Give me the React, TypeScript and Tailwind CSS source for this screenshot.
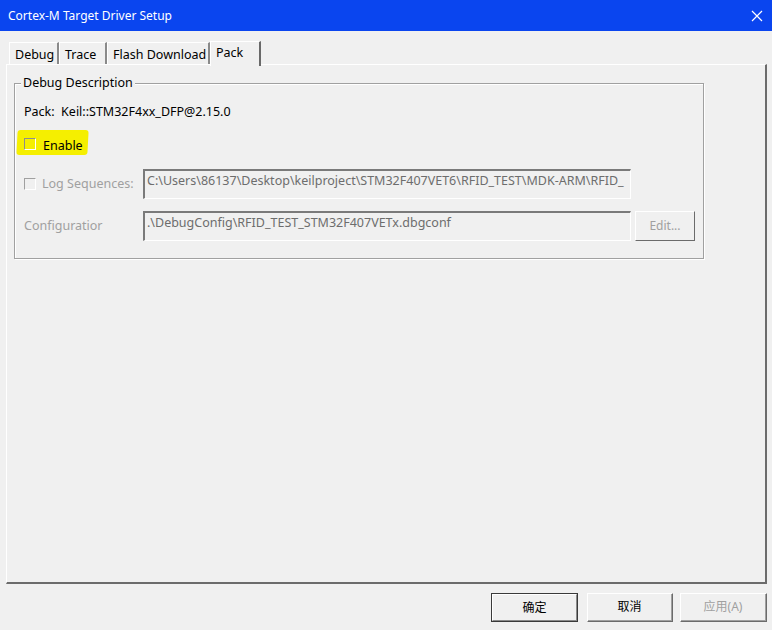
import React from "react";

const font = { fontFamily: '"Noto Sans", "Noto Sans CJK SC", sans-serif' };

function Tab({ label, active = false, w }: { label: string; active?: boolean; w: string }) {
  if (active) {
    return (
      <div
        className={`relative z-10 -mb-[2px] h-[25px] shrink-0 whitespace-nowrap ${w} border-t border-l border-white border-r-2 border-r-[#696969] bg-[#f0f0f0] pl-[5px] pt-[1px] text-[12.5px] leading-[20px] text-black`}
      >
        {label}
      </div>
    );
  }
  return (
    <div
      className={`h-[22px] shrink-0 whitespace-nowrap ${w} border-t border-l border-white border-r-2 border-r-[#8a8a8a] pl-[5px] pt-[2px] text-[12.5px] leading-[20px] text-black`}
    >
      {label}
    </div>
  );
}

function Checkbox({ disabled = false }: { disabled?: boolean }) {
  return (
    <span
      className={`relative inline-block h-[12px] w-[12px] border-t border-l border-b border-r ${
        disabled ? "border-t-[#a0a0a0] border-l-[#a0a0a0]" : "border-t-[#8d8d8d] border-l-[#8d8d8d]"
      } border-b-white border-r-white bg-transparent`}
    />
  );
}

function Field({ value, w }: { value: string; w: string }) {
  return (
    <div
      className={`h-[30px] ${w} overflow-hidden whitespace-nowrap border-t-2 border-l-2 border-t-[#7a7a7a] border-l-[#7a7a7a] border-b border-r border-b-white border-r-white bg-[#f0f0f0] pl-[2px] text-[12.5px] leading-[20px] text-[#6d6d6d]`}
    >
      {value}
    </div>
  );
}

function Button({ label, w, isDefault = false, disabled = false }: { label: string; w: string; isDefault?: boolean; disabled?: boolean }) {
  return (
    <div
      className={`flex h-[29px] ${w} items-center justify-center border ${
        isDefault ? "border-[#3a3a3a]" : "border-t-white border-l-white border-b-[#6b6b6b] border-r-[#6b6b6b]"
      } bg-[#f0f0f0] text-[12px] ${disabled ? "text-[#a0a0a0]" : "text-black"}`}
    >
      <div
        className={`flex h-full w-full items-center justify-center ${
          isDefault ? "border border-t-white border-l-white border-b-[#8a8a8a] border-r-[#8a8a8a]" : "border-b border-r border-b-[#a0a0a0] border-r-[#a0a0a0]"
        }`}
      >
        {label}
      </div>
    </div>
  );
}

export default function App() {
  return (
    <div className="flex h-[630px] w-[772px] flex-col bg-[#f0f0f0]" style={font}>
      {/* title bar */}
      <div className="flex h-[31px] items-center justify-between bg-[#0a45ef] pl-[8px] pr-[8px] text-[12px] text-white">
        <span>Cortex-M Target Driver Setup</span>
        <svg width="12" height="12" viewBox="0 0 12 12" className="mr-[1px]">
          <path d="M1 1 L11 11 M11 1 L1 11" stroke="white" strokeWidth="1.2" />
        </svg>
      </div>

      <div className="px-[6px] pt-[10px]">
        {/* tabs */}
        <div className="flex h-[23px] items-end pl-[3px]">
          <Tab label="Debug" w="w-[50px]" />
          <Tab label="Trace" w="w-[48px]" />
          <Tab label="Flash Download" w="w-[103px]" />
          <Tab label="Pack" w="w-[51px]" active />
        </div>

        {/* panel */}
        <div className="h-[520px] w-[761px] border-t border-l border-white border-r-2 border-b-2 border-r-[#6b6b6b] border-b-[#6b6b6b] pl-[7px] pt-[18px]">
          <div className="relative h-[176px] w-[690px] border border-[#a0a0a0] shadow-[inset_1px_1px_0_white,1px_1px_0_white]">
            <span className="absolute -top-[11px] left-[6px] bg-[#f0f0f0] px-[2px] text-[12.5px] leading-[20px] text-black">
              Debug Description
            </span>

            <div className="pl-[9px] pt-[18px] text-[12.5px] leading-[20px] text-black">
              Pack:&nbsp; Keil::STM32F4xx_DFP@2.15.0
            </div>

            <div className="relative ml-[9px] mt-[14px] flex h-[20px] items-center gap-[7px] text-[12.5px]">
              <span className="absolute -left-[7px] -top-[6px] h-[25px] w-[71px] -skew-x-3 rounded-[3px] bg-[#f5ef00]" />
              <span className="relative">
                <Checkbox />
              </span>
              <span className="relative text-black">Enable</span>
            </div>

            <div className="mt-[13px] flex items-center text-[12.5px]">
              <div className="flex w-[128px] items-center gap-[6px] pl-[9px]">
                <Checkbox disabled />
                <span className="text-[#a0a0a0]">Log Sequences:</span>
              </div>
              <Field
                w="w-[488px]"
                value="C:\Users\86137\Desktop\keilproject\STM32F407VET6\RFID_TEST\MDK-ARM\RFID_"
              />
            </div>

            <div className="mt-[12px] flex items-center text-[12.5px]">
              <div className="w-[128px] pl-[9px] text-[#a0a0a0]">Configuratior</div>
              <Field w="w-[488px]" value=".\DebugConfig\RFID_TEST_STM32F407VETx.dbgconf" />
              <div className="ml-[4px] flex h-[30px] w-[60px] items-center justify-center border border-t-white border-l-white border-b-[#6b6b6b] border-r-[#6b6b6b] text-[12px] text-[#a0a0a0]">
                Edit...
              </div>
            </div>
          </div>
        </div>
      </div>

      {/* buttons */}
      <div className="mt-[9px] flex pl-[491px]">
        <Button label="确定" w="w-[87px]" isDefault />
        <div className="ml-[9px]">
          <Button label="取消" w="w-[86px]" />
        </div>
        <div className="ml-[7px]">
          <Button label="应用(A)" w="w-[87px]" disabled />
        </div>
      </div>
    </div>
  );
}
